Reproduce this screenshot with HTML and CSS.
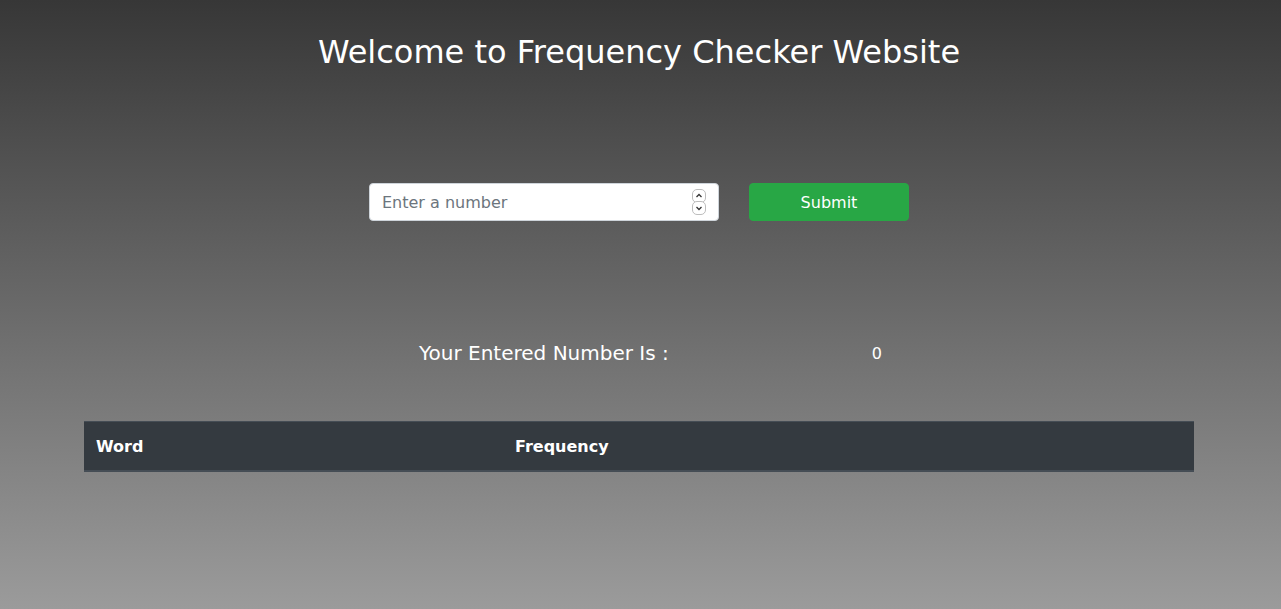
FILE: index.html
```html
<!DOCTYPE html>
<html>
<head>
<meta charset="utf-8">
<link rel="stylesheet" href="styles.css">
</head>
<body>
<div class="page">
  <h1 class="title">Welcome to Frequency Checker Website</h1>
  <form class="entry">
    <span class="field">
      <input class="num" type="number" placeholder="Enter a number">
      <svg class="spin" width="15" height="27" viewBox="0 0 15 27" aria-hidden="true">
        <rect x="0.5" y="0.5" width="13" height="13" rx="4.5" fill="#fff" stroke="#bdbdbd"/>
        <rect x="0.5" y="12.5" width="13" height="13" rx="4.5" fill="#fff" stroke="#bdbdbd"/>
        <path d="M4.5 8 L7 5.5 L9.5 8" fill="none" stroke="#333" stroke-width="1.3"/>
        <path d="M4.5 18 L7 20.5 L9.5 18" fill="none" stroke="#333" stroke-width="1.3"/>
      </svg>
    </span>
    <button class="submit" type="button">Submit</button>
  </form>
  <div class="result">
    <span class="label">Your Entered Number Is :</span>
    <span class="value">0</span>
  </div>
  <table class="freq">
    <thead>
      <tr><th class="c1">Word</th><th>Frequency</th></tr>
    </thead>
  </table>
</div>
</body>
</html>
```
FILE: styles.css
```css
html, body {
  margin: 0;
  height: 100%;
}
body {
  font-family: "DejaVu Sans", sans-serif;
  color: #fff;
  background: linear-gradient(to bottom, #373737 0%, #9b9b9b 100%);
  min-height: 609px;
}
.page {
  display: flex;
  flex-direction: column;
  align-items: center;
  padding-right: 3px;
}
.title {
  margin: 33px 0 0;
  font-size: 32px;
  font-weight: 400;
  line-height: 38px;
}
.entry {
  margin-top: 112px;
  display: flex;
  gap: 30px;
}
.field {
  position: relative;
  display: block;
  width: 350px;
  height: 38px;
}
.num {
  box-sizing: border-box;
  width: 350px;
  height: 38px;
  padding: 6px 12px;
  font-family: "DejaVu Sans", sans-serif;
  font-size: 16px;
  color: #495057;
  background: #fff;
  border: 1px solid #ced4da;
  border-radius: 4px;
  outline: none;
}
.num::placeholder { color: #6c757d; }
.num::-webkit-inner-spin-button,
.num::-webkit-outer-spin-button {
  -webkit-appearance: none;
  margin: 0;
}
.spin {
  position: absolute;
  left: 323px;
  top: 6px;
  pointer-events: none;
}
.submit {
  box-sizing: border-box;
  width: 160px;
  height: 38px;
  font-family: "DejaVu Sans", sans-serif;
  font-size: 16px;
  color: #fff;
  background: #28a745;
  border: 1px solid #28a745;
  border-radius: 4px;
}
.result {
  margin-top: 120px;
  display: flex;
  align-items: center;
  width: 463px;
  margin-left: 23px;
}
.label {
  font-size: 20px;
  line-height: 24px;
  width: 453px;
}
.value {
  font-size: 16px;
}
.freq {
  margin-top: 56px;
  width: 1110px;
  border-collapse: collapse;
}
.freq th {
  text-align: left;
  padding: 13px 12px 11px;
  font-size: 16px;
  line-height: 24px;
  font-weight: 700;
  background: #343a40;
  border-top: 1px solid #454d55;
  border-bottom: 2px solid #454d55;
}
.freq th.c1 { width: 395px; }
```
